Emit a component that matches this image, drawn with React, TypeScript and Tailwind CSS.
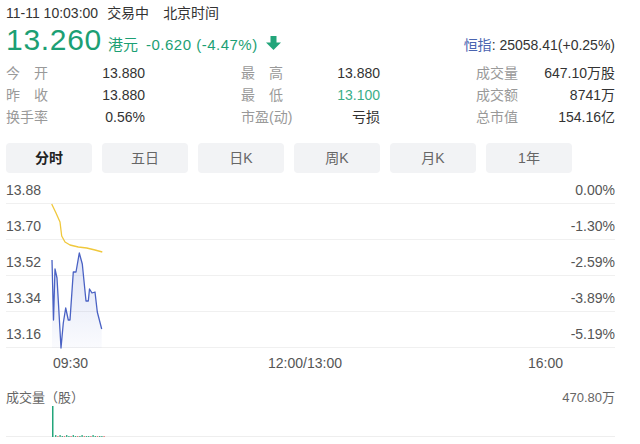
import React from "react";

const GREEN = "#1c9f74";

const stats = [
  [
    { label: "今开", value: "13.880", justify: true },
    { label: "最高", value: "13.880", justify: true },
    { label: "成交量", value: "647.10万股" },
  ],
  [
    { label: "昨收", value: "13.880", justify: true },
    { label: "最低", value: "13.100", justify: true, green: true },
    { label: "成交额", value: "8741万" },
  ],
  [
    { label: "换手率", value: "0.56%" },
    { label: "市盈(动)", value: "亏损" },
    { label: "总市值", value: "154.16亿" },
  ],
];

const tabs = ["分时", "五日", "日K", "周K", "月K", "1年"];

const rows = [
  { left: "13.88", right: "0.00%", h: "h-[24px]" },
  { left: "13.70", right: "-1.30%", h: "h-[36px]" },
  { left: "13.52", right: "-2.59%", h: "h-[36px]" },
  { left: "13.34", right: "-3.89%", h: "h-[36px]" },
  { left: "13.16", right: "-5.19%", h: "h-[36px]" },
];

// price points, relative to the chart box (x - 6, y - 180)
const price: [number, number][] = [
  [46, 80], [47.5, 140], [49, 89], [51, 98], [55, 168], [57.3, 143], [59.7, 128],
  [62.3, 140], [64, 140], [67.3, 92], [70, 92], [73.3, 73], [76.3, 84], [80, 121],
  [82.3, 121], [83.5, 109], [86, 113], [89, 112], [91.3, 132], [95.7, 149],
];
const avg: [number, number][] = [
  [45.7, 24], [50, 33], [54, 42], [55.7, 56], [59, 62], [64, 65], [72.3, 67],
  [80.7, 68], [89, 70], [96.3, 72],
];

const pts = (p: [number, number][]) => p.map(([x, y]) => `${x},${y}`).join(" ");

// tiny volume ticks after the opening bar
const vols = [2, 1, 2, 1, 1, 2, 1, 1, 2, 1, 1, 1, 2, 1, 1, 1, 1, 2, 1, 1, 1, 1, 1];

function DownArrow() {
  return (
    <svg width="15" height="14" viewBox="0 0 15 14" className="ml-[8px]">
      <rect x="4.5" y="0" width="6" height="7" fill="#22a57a" />
      <polygon points="0,6.5 15,6.5 7.5,14" fill="#22a57a" />
    </svg>
  );
}

export default function App() {
  return (
    <div className="w-[640px] h-[444px] bg-white overflow-hidden pl-[6px] pr-[25px] pt-[3px] font-['Liberation_Sans','Noto_Sans_CJK_SC',sans-serif] text-[#333]">
      {/* time + status */}
      <div className="flex items-center h-[20px] text-[14px]">
        <span>11-11 10:03:00</span>
        <span className="ml-[9px]">交易中</span>
        <span className="ml-[14px]">北京时间</span>
      </div>

      {/* price line */}
      <div className="flex items-baseline h-[34px]">
        <span className="text-[30px] leading-[34px] tracking-[0.7px]" style={{ color: GREEN }}>13.260</span>
        <span className="ml-[6px] text-[15px]" style={{ color: GREEN }}>港元</span>
        <span className="ml-[8px] text-[15px] tracking-[0.5px]" style={{ color: GREEN }}>-0.620 (-4.47%)</span>
        <DownArrow />
        <span className="ml-auto text-[14px]">
          <span className="text-[#4a64b0]">恒指</span>: 25058.41(+0.25%)
        </span>
      </div>

      {/* stats */}
      <div className="mt-[5px] text-[14px]">
        {stats.map((row, i) => (
          <div key={i} className="flex justify-between h-[22px] items-center">
            {row.map((s) => (
              <div key={s.label} className="flex w-[139px] justify-between items-center">
                <span
                  className={
                    s.justify
                      ? "inline-block w-[42px] text-[#999] [text-align-last:justify]"
                      : "text-[#999]"
                  }
                >
                  {s.label}
                </span>
                <span className={s.green ? "text-[#3aae88]" : "text-[#333]"}>{s.value}</span>
              </div>
            ))}
          </div>
        ))}
      </div>

      {/* tabs */}
      <div className="mt-[15px] flex gap-[10px]">
        {tabs.map((t, i) => (
          <div
            key={t}
            className={
              "w-[86px] h-[30px] rounded-[4px] bg-[#f2f3f5] flex items-center justify-center text-[14px] " +
              (i === 0 ? "font-bold text-[#222]" : "text-[#666]")
            }
          >
            {t}
          </div>
        ))}
      </div>

      {/* intraday chart */}
      <div className="relative mt-[7px]">
        {rows.map((r) => (
          <div
            key={r.left}
            className={`${r.h} flex items-end justify-between pb-[5px] border-b border-[#f0f0f0] text-[14px] leading-[16px] text-[#555]`}
          >
            <span>{r.left}</span>
            <span>{r.right}</span>
          </div>
        ))}
        <svg className="absolute inset-0" width="609" height="169" viewBox="0 0 609 169">
          <defs>
            <linearGradient id="fill" x1="0" y1="0" x2="0" y2="1">
              <stop offset="0" stopColor="#5b73d0" stopOpacity="0.2" />
              <stop offset="1" stopColor="#5b73d0" stopOpacity="0.03" />
            </linearGradient>
          </defs>
          <polygon points={`${pts(price)} 95.7,168 46,168`} fill="url(#fill)" />
          <polyline points={pts(price)} fill="none" stroke="#4a62c4" strokeWidth="1.3" strokeLinejoin="round" />
          <polyline points={pts(avg)} fill="none" stroke="#f0c83c" strokeWidth="1.3" strokeLinejoin="round" />
        </svg>
      </div>

      {/* time axis */}
      <div className="mt-[6px] flex h-[18px] items-center text-[14px] text-[#555]">
        <span className="ml-[47px]">09:30</span>
        <span className="ml-[180px]">12:00/13:00</span>
        <span className="ml-auto mr-[52px]">16:00</span>
      </div>

      {/* volume */}
      <div className="mt-[18px] flex justify-between h-[16px] items-center text-[13px] text-[#666]">
        <span>成交量（股）</span>
        <span>470.80万</span>
      </div>
      <div className="relative h-[31px] border-b border-[#eeeeee]">
        <svg className="absolute inset-0" width="609" height="31" viewBox="0 0 609 31">
          <rect x="46" y="0" width="1.5" height="31" fill="#22a57a" />
          {vols.map((h, i) => (
            <rect
              key={i}
              x={49 + i * 2.2}
              y={31 - h}
              width="1.4"
              height={h}
              fill={i % 3 === 1 ? "#e07b7b" : "#3fae8a"}
            />
          ))}
        </svg>
      </div>
    </div>
  );
}
